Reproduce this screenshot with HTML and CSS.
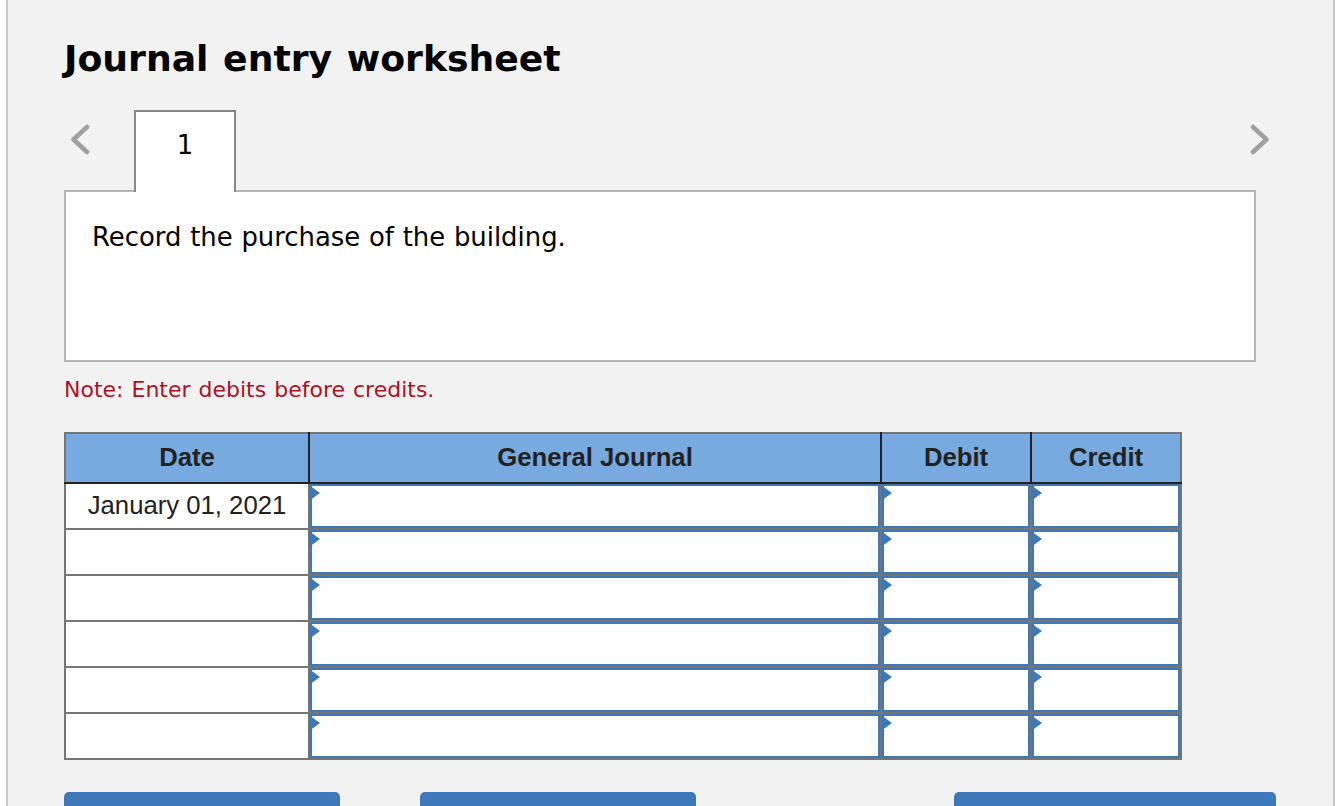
FILE: index.html
```html
<!DOCTYPE html>
<html lang="en">
<head>
    <meta charset="UTF-8">
    <title>Journal entry worksheet</title>
    <link rel="stylesheet" href="styles.css">
</head>
<body>
    <div class="worksheet">
        <h1>Journal entry worksheet</h1>

        <div class="tabs">
            <svg class="arrow" width="24" height="34" viewBox="0 0 24 34"><path d="M18 3 L4.5 15.5 L18 28" /></svg>
            <div class="tab">1</div>
            <svg class="arrow arrow-next" width="24" height="34" viewBox="0 0 24 34"><path d="M5 3 L18.5 15.5 L5 28" /></svg>
        </div>

        <div class="prompt">Record the purchase of the building.</div>

        <p class="note">Note: Enter debits before credits.</p>

        <table class="journal">
            <thead>
                <tr>
                    <th class="col-date">Date</th>
                    <th class="col-journal">General Journal</th>
                    <th class="col-amount">Debit</th>
                    <th class="col-amount">Credit</th>
                </tr>
            </thead>
            <tbody>
                <tr>
                    <td class="date">January 01, 2021</td>
                    <td class="entry"><div class="field"></div></td>
                    <td class="entry"><div class="field"></div></td>
                    <td class="entry"><div class="field"></div></td>
                </tr>
                <tr>
                    <td class="date"></td>
                    <td class="entry"><div class="field"></div></td>
                    <td class="entry"><div class="field"></div></td>
                    <td class="entry"><div class="field"></div></td>
                </tr>
                <tr>
                    <td class="date"></td>
                    <td class="entry"><div class="field"></div></td>
                    <td class="entry"><div class="field"></div></td>
                    <td class="entry"><div class="field"></div></td>
                </tr>
                <tr>
                    <td class="date"></td>
                    <td class="entry"><div class="field"></div></td>
                    <td class="entry"><div class="field"></div></td>
                    <td class="entry"><div class="field"></div></td>
                </tr>
                <tr>
                    <td class="date"></td>
                    <td class="entry"><div class="field"></div></td>
                    <td class="entry"><div class="field"></div></td>
                    <td class="entry"><div class="field"></div></td>
                </tr>
                <tr>
                    <td class="date"></td>
                    <td class="entry"><div class="field"></div></td>
                    <td class="entry"><div class="field"></div></td>
                    <td class="entry"><div class="field"></div></td>
                </tr>
            </tbody>
        </table>

        <div class="actions">
            <button class="action action-first"></button>
            <button class="action action-second"></button>
            <button class="action action-third"></button>
        </div>
    </div>
</body>
</html>
```

FILE: styles.css
```css
html, body {
    height: 806px;
    margin: 0;
    overflow: hidden;
    background-color: white;
}

.worksheet {
    box-sizing: border-box;
    width: 1329px;
    height: 806px;
    margin-left: 6px;
    padding: 0 0 0 56px;
    background-color: #f2f2f2;
    border-left: 2px solid #c8c8c8;
    border-right: 2px solid #c8c8c8;
    font-family: "DejaVu Sans", Verdana, sans-serif;
    color: black;
    overflow: hidden;
}

h1 {
    margin: 0;
    padding-top: 37px;
    height: 110px;
    box-sizing: border-box;
    font-size: 36.2px;
    line-height: 44px;
    word-spacing: 2px;
    font-weight: bold;
}

.tabs {
    display: flex;
    align-items: flex-start;
    width: 1212px;
    height: 82px;
}

.arrow {
    margin: 14px 0 0 5px;
}

.arrow path {
    fill: none;
    stroke: #a0a0a0;
    stroke-width: 4.5;
    stroke-linecap: round;
    stroke-linejoin: round;
}

.arrow-next {
    margin-left: auto;
    margin-right: 4px;
}

.tab {
    box-sizing: border-box;
    width: 102px;
    height: 82px;
    margin-left: 41px;
    padding-top: 18px;
    background-color: white;
    border: 2px solid #888;
    border-bottom: none;
    font-size: 26px;
    line-height: 30px;
    text-align: center;
    position: relative;
    z-index: 1;
}

.prompt {
    box-sizing: border-box;
    width: 1192px;
    height: 172px;
    margin-top: -2px;
    padding: 28px 26px;
    background-color: white;
    border: 2px solid #b4b4b4;
    font-size: 25.9px;
    line-height: 34px;
    word-spacing: 0.5px;
}

.note {
    margin: 15px 0 0;
    height: 55px;
    font-size: 22px;
    line-height: 26px;
    word-spacing: 1px;
    color: #b0101f;
}

.journal {
    border-collapse: collapse;
    table-layout: fixed;
    width: 1118px;
    height: 328px;
    font-family: "Liberation Sans", Arial, sans-serif;
    color: #222;
    border: 2px solid #757575;
}

th {
    height: 46px;
    padding: 0 0 2px;
    background-color: #78aae0;
    border-left: 2px solid #222;
    border-bottom: 2px solid #222;
    font-size: 25.7px;
    font-weight: bold;
    text-align: center;
}

th:first-child {
    border-left: none;
}

.col-date {
    width: 242px;
}

.col-journal {
    width: 570px;
}

.col-amount {
    width: 148px;
}

td {
    height: 44px;
    padding: 0;
    background-color: white;
    border: 2px solid #757575;
}

.date {
    height: 42px;
    padding-bottom: 2px;
    font-size: 25.7px;
    text-align: center;
}

.entry {
    position: relative;
}

.field {
    box-sizing: border-box;
    height: 44px;
    border: 2px solid #3d78b8;
    background-color: white;
}

.entry::before {
    content: "";
    position: absolute;
    top: 1px;
    left: -1px;
    border-style: solid;
    border-width: 8px 0 8px 11px;
    border-color: transparent transparent transparent #3d78b8;
}

.actions {
    display: flex;
    margin-top: 32px;
}

.action {
    height: 40px;
    padding: 0;
    border: none;
    border-radius: 5px;
    background-color: #3d78b8;
}

.action-first {
    width: 276px;
}

.action-second {
    width: 276px;
    margin-left: 80px;
}

.action-third {
    width: 322px;
    margin-left: 258px;
}
```
